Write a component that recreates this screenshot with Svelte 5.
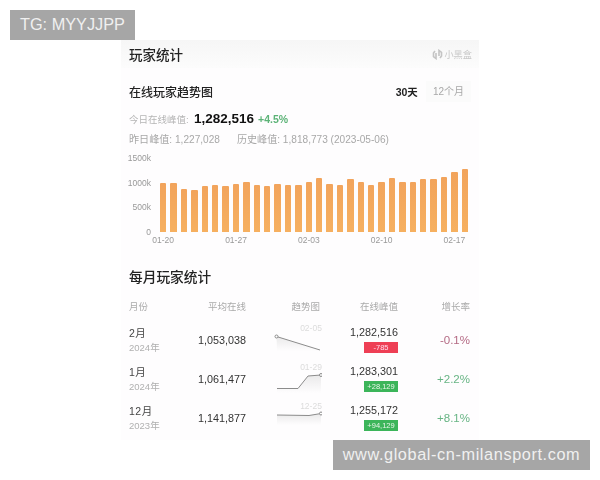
<script>
  const tops = [112,112,132,133,122,119,122,115,111,120,122,115,119,119,110,98,116,120,100,110,119,110,99,111,109,101,100,96,80,71];
  const bars = tops.map((t) => (260 - t) / 3);
  const ticks = { 0: '01-20', 7: '01-27', 14: '02-03', 21: '02-10', 28: '02-17' };

  const rows = [
    { m: '2月', y: '2024年', avg: '1,053,038', peak: '1,282,516', delta: '-785', down: true, rate: '-0.1%', date: '02-05', line: '2.5,16.5 46,30', base: 31, end: [2.5, 16.5] },
    { m: '1月', y: '2024年', avg: '1,061,477', peak: '1,283,301', delta: '+28,129', rate: '+2.2%', date: '01-29', line: '3,29.5 24,29.5 34,17 47,16', base: 34, end: [47, 16] },
    { m: '12月', y: '2023年', avg: '1,141,877', peak: '1,255,172', delta: '+94,129', rate: '+8.1%', date: '12-25', line: '3,17 35,17.5 47,15.5', base: 27, end: [47, 15.5] }
  ];
</script>

<div class="page">
  <div class="mark top">TG: MYYJJPP</div>
  <div class="mark bottom">www.global-cn-milansport.com</div>

  <div class="card">
    <header class="head">
      <h1>玩家统计</h1>
      <span class="brand">
        <svg width="11" height="11" viewBox="0 0 11 11" fill="none" stroke="#c4c4c4" stroke-width="1.6">
          <path d="M3 2 1.5 4v3.5L4 9.5V4" />
          <path d="M8 9 9.5 7V3.5L7 1.5V7" />
        </svg>
        小黑盒
      </span>
    </header>

    <section class="trend">
      <div class="title-row">
        <h2>在线玩家趋势图</h2>
        <div class="tabs">
          <span class="on">30天</span>
          <span>12个月</span>
        </div>
      </div>
      <div class="today">
        <span class="lbl">今日在线峰值:</span>
        <b>1,282,516</b>
        <em>+4.5%</em>
      </div>
      <div class="history">
        <span>昨日峰值: 1,227,028</span>
        <span>历史峰值: 1,818,773 (2023-05-06)</span>
      </div>

      <div class="chart">
        <div class="yaxis">
          <span>1500k</span><span>1000k</span><span>500k</span><span>0</span>
        </div>
        <div class="plot">
          {#each bars as h}
            <div class="slot"><i style="height:{h}px"></i></div>
          {/each}
        </div>
        <div class="xaxis">
          {#each bars as _, i}
            <span>{ticks[i] ?? ''}</span>
          {/each}
        </div>
      </div>
    </section>

    <section class="monthly">
      <h2 class="big">每月玩家统计</h2>
      <div class="table">
        <div class="th">月份</div>
        <div class="th r">平均在线</div>
        <div class="th c">趋势图</div>
        <div class="th r">在线峰值</div>
        <div class="th r">增长率</div>

        {#each rows as row, i}
          <div class="month"><span>{row.m}</span><small>{row.y}</small></div>
          <div class="num r">{row.avg}</div>
          <svg class="spark" width="48" height="39" viewBox="0 0 48 39">
            <defs>
              <linearGradient id="fade{i}" x1="0" y1="0" x2="0" y2="1">
                <stop offset="0" stop-color="#ccc" stop-opacity="0.4" />
                <stop offset="1" stop-color="#ccc" stop-opacity="0" />
              </linearGradient>
            </defs>
            <polygon points="{row.line} {i === 0 ? 46 : 47},{row.base} 3,{row.base}" fill="url(#fade{i})" />
            <polyline points={row.line} fill="none" stroke="#8c8c8c" stroke-width="1" />
            <circle cx={row.end[0]} cy={row.end[1]} r="1.5" fill="#fff" stroke="#8c8c8c" />
            <text x="37" y="11" text-anchor="middle">{row.date}</text>
          </svg>
          <div class="peak">
            <span class="num">{row.peak}</span>
            <span class="delta" class:down={row.down}>{row.delta}</span>
          </div>
          <div class="rate r" class:neg={row.down}>{row.rate}</div>
        {/each}
      </div>
    </section>
  </div>
</div>

<style>
  :global(body) {
    margin: 0;
    background: #fff;
  }
  .page {
    position: relative;
    width: 600px;
    height: 480px;
    overflow: hidden;
    padding: 40px 0 0 121px;
    box-sizing: border-box;
    font-family: "Liberation Sans", "Noto Sans CJK SC", sans-serif;
    color: #222;
  }
  .mark {
    position: absolute;
    z-index: 2;
    height: 30px;
    line-height: 29px;
    background: #a6a6a6;
    color: #f0f0f0;
    font-size: 16.3px;
    text-align: center;
  }
  .mark.top {
    left: 10px;
    top: 10px;
    width: 125px;
  }
  .mark.bottom {
    left: 333px;
    top: 440px;
    width: 257px;
    letter-spacing: 0.6px;
  }
  .card {
    width: 358px;
    height: 400px;
    background: #fefdfe;
    filter: blur(0.35px);
  }
  .head {
    display: flex;
    justify-content: space-between;
    align-items: center;
    height: 28px;
    padding: 0 7px 0 8px;
    background: linear-gradient(#f6f6f6, #fcfcfc);
  }
  h1 {
    margin: 0;
    font-size: 13.5px;
    font-weight: 500;
  }
  .brand {
    display: flex;
    align-items: center;
    gap: 1px;
    font-size: 9.2px;
    color: #c8c8c8;
  }
  .trend {
    padding: 13px 9px 0 8px;
  }
  .title-row {
    display: flex;
    justify-content: space-between;
    align-items: center;
    height: 21px;
  }
  h2 {
    margin: 0;
    font-size: 12px;
    font-weight: 500;
  }
  h2.big {
    font-size: 13.7px;
  }
  .tabs {
    display: flex;
    align-items: center;
    height: 21px;
    font-size: 10px;
    color: #a8a8a8;
    gap: 15px;
  }
  .tabs span:last-child {
    background: #fbfbfb;
    line-height: 21px;
    padding: 0 7px;
    margin-left: -7px;
    margin-right: -1px;
  }
  .tabs .on {
    color: #222;
    font-weight: 700;
    font-size: 10.5px;
  }
  .today {
    display: flex;
    align-items: baseline;
    margin-top: 9px;
    height: 18px;
    font-size: 9.5px;
  }
  .lbl {
    color: #b5b5b5;
    width: 65px;
  }
  .today b {
    font-size: 13.5px;
    color: #111;
  }
  .today em {
    font-style: normal;
    font-weight: 700;
    font-size: 10.5px;
    color: #5cb377;
    margin-left: 4px;
  }
  .history {
    display: flex;
    gap: 17px;
    margin-top: 2px;
    height: 18px;
    font-size: 10.1px;
    color: #a8a8a8;
  }
  .chart {
    display: grid;
    grid-template-columns: 22px 312px;
    column-gap: 7px;
    grid-template-rows: 74px 16px;
    margin-top: 9px;
  }
  .yaxis {
    display: flex;
    flex-direction: column;
    justify-content: space-between;
    align-items: flex-end;
    font-size: 8.5px;
    color: #999;
    line-height: 10px;
    margin: -5px 0 -5px -6px;
  }
  .plot {
    display: grid;
    grid-template-columns: repeat(30, minmax(0, 1fr));
    align-items: end;
    height: 74px;
  }
  .slot {
    display: flex;
    justify-content: center;
  }
  .slot i {
    display: block;
    width: 6.5px;
    border-radius: 1px 1px 0 0;
    background: linear-gradient(#f2a45c, #f6b060);
  }
  .xaxis {
    grid-column: 2;
    display: grid;
    grid-template-columns: repeat(30, minmax(0, 1fr));
    align-items: center;
    font-size: 8.5px;
    color: #999;
  }
  .xaxis span {
    justify-self: center;
    white-space: nowrap;
  }
  .monthly {
    padding: 18px 9px 0 8px;
  }
  .table {
    display: grid;
    grid-template-columns: 50px 67px 28px 48px 76px 72px;
    grid-template-rows: 28px repeat(3, 39px);
    margin-top: 6px;
    align-items: center;
  }
  .th {
    font-size: 9.5px;
    color: #aaa;
  }
  .th.c {
    grid-column: 3 / 5;
    text-align: right;
    padding-right: 2px;
  }
  .r {
    text-align: right;
  }
  .month {
    display: flex;
    flex-direction: column;
    gap: 3px;
    padding-top: 2px;
    font-size: 10.5px;
    line-height: 12px;
    letter-spacing: 0.5px;
    color: #444;
  }
  .month small {
    font-size: 9.5px;
    letter-spacing: 0;
    color: #b0b0b0;
  }
  .num {
    font-size: 10.8px;
    color: #333;
  }
  .spark {
    grid-column: 4;
    display: block;
  }
  .spark text {
    font-size: 8.5px;
    fill: #dcdcdc;
    font-family: "Liberation Sans", sans-serif;
  }
  .peak {
    display: flex;
    flex-direction: column;
    align-items: flex-end;
    gap: 3px;
    line-height: 13px;
  }
  .delta {
    height: 11px;
    width: 34px;
    line-height: 11px;
    text-align: center;
    font-size: 7.5px;
    color: #e8f5e9;
    background: #3cb55a;
  }
  .delta.down {
    background: #ee3f55;
    color: #fde;
  }
  .rate {
    font-size: 11.5px;
    color: #68b585;
  }
  .rate.neg {
    color: #b46a84;
  }
</style>
